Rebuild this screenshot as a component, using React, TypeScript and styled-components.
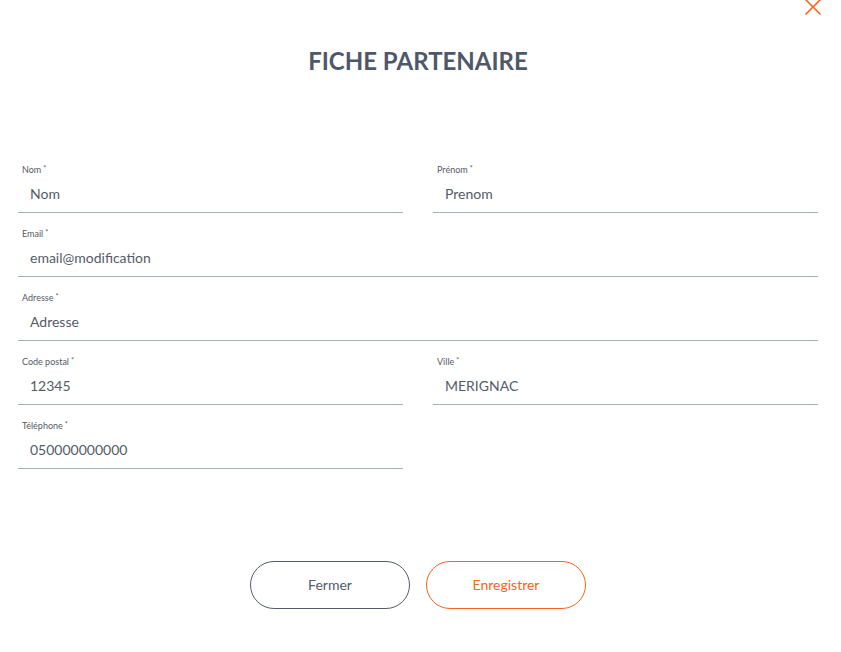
import React from "react";
import styled, { createGlobalStyle } from "styled-components";

const Global = createGlobalStyle`
  html, body { margin: 0; padding: 0; background: #ffffff; }
  body { font-family: Lato, "Open Sans", sans-serif; }
  * { box-sizing: border-box; }
`;

const Page = styled.div`
  position: relative;
  width: 841px;
  height: 652px;
  padding: 0 23px 0 18px;
  overflow: hidden;
`;

const Close = styled.button`
  position: absolute;
  top: -2px;
  right: 19px;
  width: 18px;
  height: 18px;
  padding: 0;
  border: none;
  background: transparent;
  display: flex;
  align-items: center;
  justify-content: center;
`;

const Title = styled.h1`
  margin: 0;
  padding-top: 46px;
  font-size: 24px;
  line-height: 30px;
  font-weight: 700;
  color: #4f5869;
  text-align: center;
  letter-spacing: 0;
`;

const Form = styled.div`
  margin-top: 88px;
  display: grid;
  grid-template-columns: 385px 385px;
  column-gap: 30px;
  row-gap: 15px;
`;

const Field = styled.div<{ $full?: boolean }>`
  grid-column: ${(p) => (p.$full ? "1 / span 2" : "auto")};
  display: flex;
  flex-direction: column;
  border-bottom: 1px solid #a6adbb;
`;

const Label = styled.label`
  padding-left: 4px;
  font-size: 9px;
  line-height: 12px;
  color: #555a64;
  sup {
    font-size: 7px;
    vertical-align: top;
    line-height: 9px;
    margin-left: 2px;
  }
`;

const Input = styled.input`
  height: 36px;
  border: none;
  outline: none;
  padding: 0 12px 2px;
  font-family: Lato, "Open Sans", sans-serif;
  font-size: 14px;
  color: #555b69;
  background: transparent;
`;

const Spacer = styled.div``;

const Actions = styled.div`
  margin-top: 92px;
  display: flex;
  justify-content: center;
  gap: 16px;
`;

const Button = styled.button<{ $primary?: boolean }>`
  width: 160px;
  height: 48px;
  padding: 0 0 2px;
  border-radius: 24px;
  background: #ffffff;
  border: 1px solid ${(p) => (p.$primary ? "#f5651f" : "#535b6c")};
  color: ${(p) => (p.$primary ? "#f5651f" : "#535b6c")};
  font-family: Lato, "Open Sans", sans-serif;
  font-size: 14px;
  cursor: pointer;
`;

type F = { label: string; value: string; full?: boolean };

const fields: (F | null)[] = [
  { label: "Nom", value: "Nom" },
  { label: "Prénom", value: "Prenom" },
  { label: "Email", value: "email@modification", full: true },
  { label: "Adresse", value: "Adresse", full: true },
  { label: "Code postal", value: "12345" },
  { label: "Ville", value: "MERIGNAC" },
  { label: "Téléphone", value: "050000000000" },
  null,
];

export default function App() {
  return (
    <Page>
      <Global />
      <Close aria-label="Fermer">
        <svg width="18" height="18" viewBox="0 0 18 18">
          <path d="M1.5 1.5 L16.5 16.5 M16.5 1.5 L1.5 16.5" stroke="#f5651f" strokeWidth="1.6" fill="none" />
        </svg>
      </Close>
      <Title>FICHE PARTENAIRE</Title>
      <Form>
        {fields.map((f, i) =>
          f ? (
            <Field key={i} $full={f.full}>
              <Label>
                {f.label}
                <sup>*</sup>
              </Label>
              <Input defaultValue={f.value} />
            </Field>
          ) : (
            <Spacer key={i} />
          )
        )}
      </Form>
      <Actions>
        <Button>Fermer</Button>
        <Button $primary>Enregistrer</Button>
      </Actions>
    </Page>
  );
}
